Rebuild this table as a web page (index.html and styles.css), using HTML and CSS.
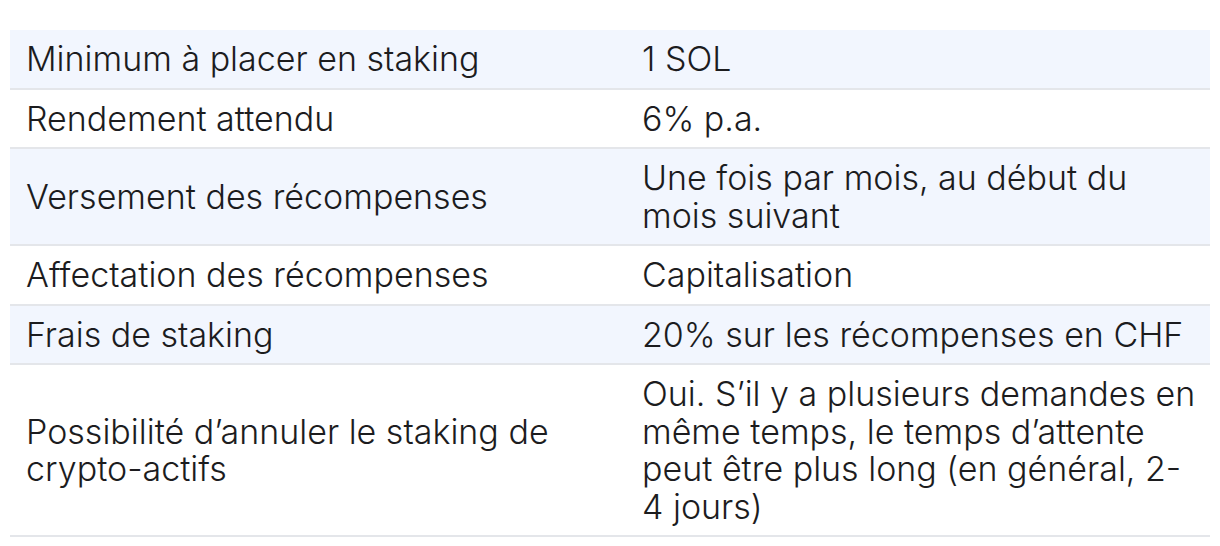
FILE: index.html
```html
<!DOCTYPE html>
<html lang="fr">
<head>
<meta charset="utf-8">
<title>Staking SOL</title>
<link rel="stylesheet" href="styles.css">
</head>
<body>
<div class="page">
  <div class="table">
    <div class="row shaded">
      <div class="cell">Minimum à placer en staking</div>
      <div class="cell value">1 SOL</div>
    </div>
    <div class="row">
      <div class="cell">Rendement attendu</div>
      <div class="cell value">6% p.a.</div>
    </div>
    <div class="row shaded">
      <div class="cell">Versement des récompenses</div>
      <div class="cell value">Une fois par mois, au début du mois suivant</div>
    </div>
    <div class="row">
      <div class="cell">Affectation des récompenses</div>
      <div class="cell value">Capitalisation</div>
    </div>
    <div class="row shaded">
      <div class="cell">Frais de staking</div>
      <div class="cell value">20% sur les récompenses en CHF</div>
    </div>
    <div class="row">
      <div class="cell">Possibilité d’annuler le staking de crypto-actifs</div>
      <div class="cell value">Oui. S’il y a plusieurs demandes en même temps, le temps d’attente peut être plus long (en général, 2-4 jours)</div>
    </div>
  </div>
</div>
</body>
</html>
```

FILE: styles.css
```css
html, body {
  margin: 0;
  padding: 0;
  background: #ffffff;
}

body {
  font-family: "Inter", "Noto Sans", "Liberation Sans", sans-serif;
  color: #1c1c1e;
}

.page {
  padding: 30px 10px 0 10px;
}

.table {
  display: flex;
  flex-direction: column;
  width: 1200px;
}

.row {
  display: grid;
  grid-template-columns: 616px 1fr;
  border-bottom: 2px solid #e4e6ea;
}

.row.shaded {
  background: #f2f6fe;
}

.cell {
  align-self: center;
  padding: 10px 17px 10px 16px;
  font-size: 34px;
  line-height: 37.5px;
  font-weight: 300;
}

.cell.value {
  padding-left: 16px;
  padding-right: 12px;
}
```
